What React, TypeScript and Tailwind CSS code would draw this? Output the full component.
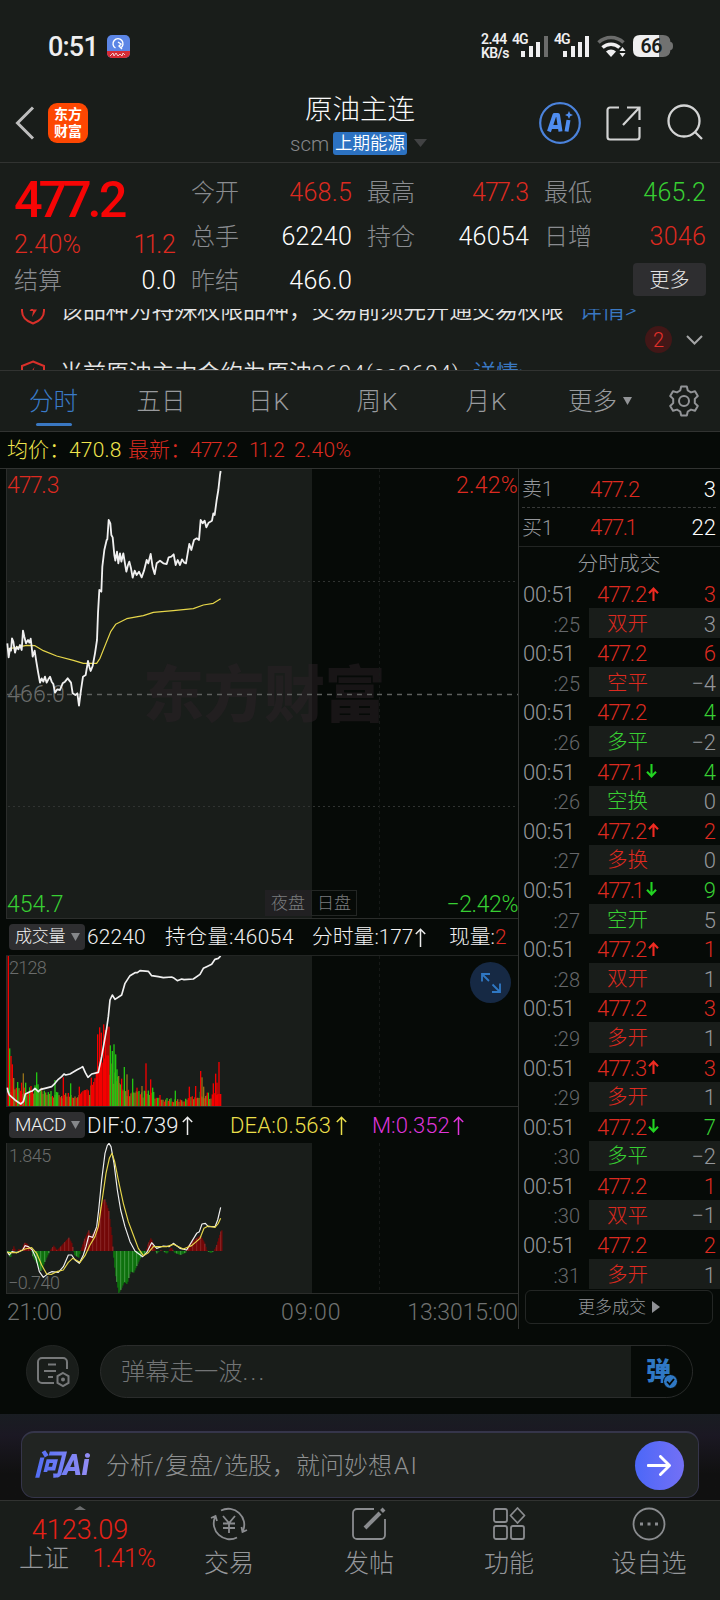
import React from 'react';

const RED = '#dc2a20';

interface Trade {
  sec: string;
  price: string;
  dir?: 'up' | 'down';
  qty: number;
  kind: string;
  change: number;
  green?: boolean;
}

const trades: Trade[] = [
  { sec: ':25', price: '477.2', dir: 'up', qty: 3, kind: '双开', change: 3 },
  { sec: ':25', price: '477.2', qty: 6, kind: '空平', change: -4 },
  { sec: ':26', price: '477.2', qty: 4, kind: '多平', change: -2, green: true },
  { sec: ':26', price: '477.1', dir: 'down', qty: 4, kind: '空换', change: 0, green: true },
  { sec: ':27', price: '477.2', dir: 'up', qty: 2, kind: '多换', change: 0 },
  { sec: ':27', price: '477.1', dir: 'down', qty: 9, kind: '空开', change: 5, green: true },
  { sec: ':28', price: '477.2', dir: 'up', qty: 1, kind: '双开', change: 1 },
  { sec: ':29', price: '477.2', qty: 3, kind: '多开', change: 1 },
  { sec: ':29', price: '477.3', dir: 'up', qty: 3, kind: '多开', change: 1 },
  { sec: ':30', price: '477.2', dir: 'down', qty: 7, kind: '多平', change: -2, green: true },
  { sec: ':30', price: '477.2', qty: 1, kind: '双平', change: -1 },
  { sec: ':31', price: '477.2', qty: 2, kind: '多开', change: 1 },
];

// Series are stored at 3x resolution and scaled down in the svg
const priceLine =
  '22,550 26,592 30,565 33,572 36,535 40,545 45,578 50,560 55,568 60,555 65,570 69,512 73,530 78,550 84,540 88,548 92,536 95,560 98,590 104,572 109,605 114,635 120,668 125,655 130,665 135,650 140,668 145,658 150,650 155,665 160,672 165,698 172,688 180,690 188,670 195,665 203,655 213,668 218,700 226,705 232,700 237,737 243,690 249,650 257,645 264,603 268,620 272,633 278,618 285,580 291,540 294,460 298,390 304,395 307,320 313,270 320,240 322,238 326,180 331,190 334,225 338,232 343,285 346,302 351,275 355,310 360,280 364,305 370,280 374,305 379,335 384,315 388,305 393,325 398,353 404,332 410,345 417,335 425,352 432,332 440,300 445,310 452,282 458,322 464,342 470,310 480,302 490,310 500,312 506,292 514,290 521,283 527,315 533,300 540,315 546,298 553,308 558,310 563,280 568,252 574,270 582,240 590,235 597,240 602,180 608,190 614,182 619,202 626,188 636,182 640,160 644,165 650,120 655,90 660,45 662,33';
const avgLine =
  '22,567 50,562 80,556 105,557 130,572 170,588 220,601 250,610 290,610 300,595 318,550 332,515 347,493 380,476 430,467 460,457 520,452 580,446 610,435 640,430 662,416';
const holdLine =
  '22,533 24,545 28,555 45,570 62,582 70,575 76,552 90,545 97,543 105,535 115,545 122,538 135,535 155,530 165,520 175,508 185,500 192,492 197,495 210,492 230,480 240,475 248,470 256,488 264,502 275,492 295,487 305,440 320,355 325,320 330,270 337,255 345,268 365,255 375,220 390,197 405,188 412,188 420,182 445,184 455,197 475,200 490,203 515,201 520,203 532,212 545,207 552,209 580,207 600,193 610,175 620,170 635,163 645,148 655,145 662,138';
const difLine =
  '22,455 28,465 36,455 50,458 68,450 75,437 85,440 97,450 108,475 118,515 130,532 145,520 155,515 175,517 190,500 205,465 215,465 225,480 238,490 250,465 258,440 266,408 278,412 290,380 296,330 305,240 315,160 322,136 327,130 333,140 342,190 352,270 362,330 375,380 390,425 405,453 428,470 440,458 455,428 470,445 490,438 508,440 520,430 540,445 560,450 575,425 590,400 598,395 606,372 616,370 625,380 645,380 653,360 662,322';
const deaLine =
  '22,458 50,458 75,447 95,443 110,460 125,495 140,522 155,523 170,515 190,510 205,487 218,475 240,487 255,467 270,435 285,410 295,380 305,310 318,220 328,175 336,160 344,185 355,240 370,310 385,365 400,405 415,445 430,467 445,458 460,440 500,440 520,433 550,447 575,437 600,415 612,385 625,378 645,382 655,370 662,355';

const volPeaks: [number, number, number][] = [
  [25, 452, 0], [29, 173, 1], [33, 150, 0], [37, 125, 0], [41, 84, 2], [53, 72, 1], [65, 70, 0], [70, 98, 2], [77, 70, 1], [93, 60, 0], [105, 62, 1], [110, 101, 1],
  [114, 65, 1], [125, 55, 2], [153, 45, 1], [165, 78, 1], [190, 86, 0], [212, 68, 1], [238, 58, 0], [274, 85, 0], [293, 215, 0], [299, 236, 0], [304, 220, 0], [311, 245, 0],
  [316, 228, 0], [321, 238, 0], [327, 238, 0], [331, 182, 1], [337, 165, 1], [342, 185, 1], [347, 155, 1], [351, 110, 1], [356, 90, 2], [365, 82, 0], [373, 117, 1], [381, 95, 2], [398, 82, 1], [411, 55, 0],
  [426, 60, 2], [438, 128, 0], [452, 80, 0], [458, 55, 1], [480, 33, 0], [526, 46, 1], [568, 58, 0], [587, 60, 0], [602, 105, 0], [606, 86, 2], [611, 58, 2], [622, 40, 0], [640, 68, 0],
  [647, 97, 0], [651, 70, 0], [657, 132, 0], [662, 36, 0],
];
const volEnvelope: [number, number][] = [
  [22, 90], [40, 70], [60, 62], [110, 55], [140, 42], [230, 44], [262, 52], [278, 80], [290, 120], [326, 165], [345, 110], [360, 65], [400, 45], [455, 50], [470, 25], [555, 22], [600, 45], [640, 40], [664, 36],
];
const macdShape: [number, number][] = [
  [22, -5], [30, -22], [36, 3], [40, 14], [45, 2], [50, -3], [54, 6], [64, 3], [72, 25], [80, 22], [92, 5], [98, -20], [110, -38], [122, -62], [132, -35], [148, 0], [160, 16],
  [170, 2], [185, 18], [205, 40], [215, 22], [222, -12], [235, -20], [242, 5], [252, 35], [265, 62], [272, 42], [285, 65], [293, 75], [300, 130], [312, 158], [325, 120], [335, 40],
  [338, 0], [345, -70], [355, -127], [362, -115], [372, -92], [380, -100], [390, -62], [400, -65], [415, -32], [425, -12], [435, -8], [442, 20], [452, 40], [460, 15], [468, -8], [482, 3], [500, -8],
  [512, 12], [522, -5], [540, -12], [556, -5], [562, 15], [580, 32], [600, 47], [612, 25], [620, 0], [632, -6], [640, 0], [648, 15], [662, 62],
];

function at(points: [number, number][], x: number) {
  for (let i = 1; i < points.length; i++) {
    if (x <= points[i][0]) {
      const [x0, y0] = points[i - 1];
      const [x1, y1] = points[i];
      return y0 + ((y1 - y0) * (x - x0)) / (x1 - x0);
    }
  }
  return points[points.length - 1][1];
}

const volColors = ['#f40000', '#22c412', '#94701a'];

function VolumeBars() {
  const bars: React.ReactNode[] = [];
  for (let i = 0; i < 160; i++) {
    const x = 23 + i * 4;
    const r = Math.abs(Math.sin(i * 12.9898) * 43758.5453) % 1;
    const solid = (x > 272 && x < 327) || x > 636 || (x > 240 && x < 266);
    const h = at(volEnvelope, x) * (solid ? 0.85 + r * 0.15 : 0.5 + r * 0.5);
    const c = solid ? 0 : r > 0.86 ? 1 : i % 3 === 0 ? 0 : 2;
    bars.push(<rect key={i} x={x} y={588 - h} width="4" height={h} fill={volColors[c]} />);
  }
  return (
    <>
      {bars}
      {volPeaks.map(([x, h, c]) => (
        <rect key={'p' + x} x={x - 2} y={588 - h} width="4" height={h} fill={volColors[c]} />
      ))}
    </>
  );
}

function MacdBars() {
  const bars: React.ReactNode[] = [];
  for (let x = 22; x < 665; x += 3) {
    const v = at(macdShape, x);
    const lit = Math.floor(x / 3) % 4 === 0;
    const fill = v > 0 ? (lit ? '#a52a2a' : '#8a0303') : lit ? '#4fb54f' : '#0b860b';
    bars.push(<rect key={x} x={x} y={v > 0 ? 453 - v : 453} width="3.2" height={Math.abs(v)} fill={fill} />);
  }
  return <>{bars}</>;
}

function Num({ value }: { value: string }) {
  if (value.startsWith('477.')) {
    return (
      <span>
        <span className="tracking-[-0.04em]">4</span>
        <span className="tracking-[-0.07em]">77</span>
        <span className={value.endsWith('1') ? 'tracking-[-0.11em]' : 'tracking-[0em]'}>.</span>
        {value.slice(4)}
      </span>
    );
  }
  if (value.startsWith('11.')) {
    return <span><span className="tracking-[-0.1em]">11</span>{value.slice(2)}</span>;
  }
  return <span className="tracking-[0.01em]">{value}</span>;
}

function Arrow({ dir }: { dir: 'up' | 'down' }) {
  return (
    <svg width="11" height="14" viewBox="0 0 11 14" fill="none" stroke={dir === 'up' ? '#ef2b22' : '#22d422'} strokeWidth="2.1" className="-mt-[2px] ml-[1px] shrink-0">
      {dir === 'up' ? <path d="M5.5 14V2M1 6.2 5.5 1.6 10 6.2" /> : <path d="M5.5 0v12M1 7.8l4.5 4.6L10 7.8" />}
    </svg>
  );
}

function LongArrow({ color }: { color: string }) {
  return (
    <svg width="11" height="19" viewBox="0 0 11 19" fill="none" stroke={color} strokeWidth="1.5" className="shrink-0">
      <path d="M5.5 19V1.5M.8 6 5.5 1.3 10.2 6" />
    </svg>
  );
}

function StatusBar() {
  return (
    <div className="flex h-[92px] items-center pl-[48px] pr-[47px] text-[#efeff0]">
      <span className="w-[50px] pt-[2px] text-[27px] leading-none font-medium tracking-[-0.8px]">0:51</span>
      <svg width="23" height="23" viewBox="0 0 23 23" className="ml-[9px]">
        <rect width="23" height="23" rx="5" fill="#5c86e6" />
        <path d="M0 16h23v2a5 5 0 0 1-5 5H5a5 5 0 0 1-5-5z" fill="#d62b35" />
        <path d="M8.5 13a5 5 0 1 1 5 0M11 7l3 2-2 2 3 3" fill="none" stroke="#fff" strokeWidth="1.4" />
        <path d="M3 21l3-3 1 3 2-3 2 3 2-2 2 2 1-3 2 2" fill="none" stroke="#f4c8cb" strokeWidth="1" />
      </svg>
      <div className="ml-auto flex h-[27px] items-start text-[14px] leading-[14.5px] font-semibold">
        <div className="-mt-[1px] w-[31px] tracking-[-0.6px]">2.44<br />KB/s</div>
        <svg width="38" height="27" viewBox="0 0 38 27" className="mr-[4px] overflow-visible">
          <text x="0" y="11" fontSize="14" letterSpacing="-1" fill="#efeff0">4G</text>
          <path d="M9 24v-6h4v6zM17 24V13h4v11zM24 24V9h4v15z" fill="#efeff0" />
          <path d="M32 24V3h4v21z" fill="#6b6c6b" />
        </svg>
        <svg width="38" height="27" viewBox="0 0 38 27" className="mr-[5px] overflow-visible">
          <text x="0" y="11" fontSize="14" letterSpacing="-1" fill="#efeff0">4G</text>
          <path d="M9 24v-6h4v6zM17 24V13h4v11zM24 24V9h4v15zM31 24V3h4v21z" fill="#efeff0" />
        </svg>
        <svg width="30" height="27" viewBox="0 0 30 27" fill="none" className="mr-[6px]">
          <path d="M1.5 9.500a18 18 0 0 1 25 0" stroke="#6b6c6b" strokeWidth="3.500" />
          <path d="M5.5 14.500a12.500 12.500 0 0 1 17 0" stroke="#efeff0" strokeWidth="3.500" />
          <path d="M9 18.500a7.500 7.500 0 0 1 10 0L14 24z" fill="#efeff0" />
          <path d="M25.500 14l3 4h-6zM25.500 24l3-4h-6z" fill="#efeff0" />
        </svg>
        <svg width="40" height="27" viewBox="0 0 40 27">
          <path d="M26 2h4q7 0 7.500 7 2.500 0 2.500 4t-2.500 4q-.5 7-7.500 7h-4z" fill="#717271" />
          <path d="M7 2h19v22H7q-7 0-7-7V9q0-7 7-7z" fill="#efeff0" />
          <text x="7.500" y="20" fontSize="19.500" letterSpacing="-.5" fill="#191d1a">66</text>
        </svg>
      </div>
    </div>
  );
}

function Header() {
  return (
    <header className="flex h-[71px] items-start border-b border-[#313331] pl-[15px] pr-[16px]">
      <svg width="20" height="34" viewBox="0 0 20 34" fill="none" className="mt-[14px]">
        <path d="M18 1.500 2.500 17 18 32.500" stroke="#bdbdbd" strokeWidth="3" />
      </svg>
      <div className="mt-[11px] ml-[13px] flex size-[40px] flex-col items-center justify-center rounded-[9px] bg-[#fd4702] text-[14px] leading-[17px] font-bold text-white">
        <span>东方</span>
        <span>财富</span>
      </div>
      <div className="ml-[202px] w-[138px]">
        <div className="pt-[1px] pl-[15px] text-[27.500px] leading-[34px] text-[#fafafa]">原油主连</div>
        <div className="mt-[4px] flex h-[24px] items-center">
          <span className="w-[43px] pt-[2px] text-[20.500px] text-[#85878a]">scm</span>
          <span className="rounded-[3px] bg-[#2c72c2] px-[2px] text-[17.500px] leading-[23px] font-[350] text-white">上期能源</span>
          <svg width="13" height="8" viewBox="0 0 13 8" className="ml-[7px] shrink-0"><path d="M0 0h13L6.500 8z" fill="#414243" /></svg>
        </div>
      </div>
      <svg width="42" height="42" viewBox="0 0 42 42" fill="none" className="mt-[10px] ml-[111px]">
        <circle cx="21" cy="21" r="19.800" stroke="#4b83dc" strokeWidth="2.200" />
        <path d="M10 29.500 15.500 13h3.500l2.500 16.500M12 25h9" stroke="#4f8df0" strokeWidth="4" strokeLinejoin="round" />
        <path d="M29.500 18l-2 11.500" stroke="#4f8df0" strokeWidth="4" />
        <path d="M30 9l1.200 2.800 2.800 1.200-2.800 1.200-1.200 2.800-1.200-2.800-2.800-1.200 2.800-1.200z" fill="#4f8df0" />
      </svg>
      <svg width="35" height="35" viewBox="0 0 35 35" fill="none" stroke="#d3d4d4" strokeWidth="2.200" className="mt-[14px] ml-[25px]">
        <path d="M13 1.500H4a2.500 2.500 0 0 0-2.500 2.500v27A2.500 2.500 0 0 0 4 33.500h27a2.500 2.500 0 0 0 2.500-2.500V21M21 1.500h12.500V14M33 2 17 19" />
      </svg>
      <svg width="37" height="37" viewBox="0 0 37 37" fill="none" stroke="#d3d4d4" strokeWidth="2.300" className="mt-[12px] ml-[26px]">
        <circle cx="17" cy="17" r="15.500" />
        <path d="m28 28 7 7" />
      </svg>
    </header>
  );
}

function Cell({ label, value, color }: { label: string; value: string; color: string }) {
  return (
    <div className="flex h-[44px] items-center justify-between pt-[2px]">
      <span className="text-[24px] text-[#8a8c90]">{label}</span>
      <span className="text-[25px]" style={{ color }}><Num value={value} /></span>
    </div>
  );
}

function Quotes() {
  return (
    <section className="flex h-[146px] pt-[7px] pr-[14px] pl-[14px]">
      <div className="w-[162px]">
        <div className="h-[52px] text-[50.500px] leading-[60px] font-medium text-[#f60505]">
          <span className="tracking-[-4.200px]">477</span><span className="tracking-[-2.800px]">.</span>2
        </div>
        <div className="flex h-[36px] items-center justify-between pt-[10px] text-[25px] text-[#dc2a20]">
          <Num value="2.40%" />
          <Num value="11.2" />
        </div>
        <Cell label="结算" value="0.0" color="#fff" />
      </div>
      <div className="ml-[15px] w-[161px]">
        <Cell label="今开" value="468.5" color={RED} />
        <Cell label="总手" value="62240" color="#fff" />
        <Cell label="昨结" value="466.0" color="#fff" />
      </div>
      <div className="ml-[15px] w-[162px]">
        <Cell label="最高" value="477.3" color={RED} />
        <Cell label="持仓" value="46054" color="#fff" />
      </div>
      <div className="ml-[15px] w-[162px]">
        <Cell label="最低" value="465.2" color="#38cf33" />
        <Cell label="日增" value="3046" color={RED} />
        <div className="mt-[5px] ml-auto flex h-[33px] w-[73px] items-center justify-center rounded-[4px] bg-[#2e2e30] text-[20px] text-[#e3e3e3]">更多</div>
      </div>
    </section>
  );
}

function Shield() {
  return (
    <svg width="26" height="28" viewBox="0 0 26 28" fill="none" stroke="#d9302a" strokeWidth="2" className="mr-[13px] shrink-0">
      <path d="M12 1.500 23 6v8c0 6-4 10-11 12.500C5 24 1 20 1 14V6z" />
      <path d="M13.500 7 8.500 14h3.500l-1 6 5-7.500h-4z" fill="#d9302a" stroke="none" />
    </svg>
  );
}

function Notices() {
  return (
    <section className="relative h-[62px] overflow-hidden border-b border-[#313331] pl-[21px] font-[350]">
      <div className="-mt-[13px] flex h-[30px] items-center whitespace-nowrap text-[22.900px] text-[#e6e6e6]">
        <Shield />
        <span className="w-[519px]">该品种为特殊权限品种，交易前须先开通交易权限</span>
        <span className="text-[#3a78c2]">详情&gt;</span>
      </div>
      <div className="mt-[33px] flex h-[30px] items-center whitespace-nowrap text-[22.900px] text-[#e6e6e6]">
        <Shield />
        <span className="w-[413px]">当前原油主力合约为原油<span className="tracking-[0.700px]">2604(sc2604)</span></span>
        <span className="text-[#3a78c2]">详情&gt;</span>
      </div>
      <div className="absolute top-[17px] right-[17px] flex items-center">
        <span className="flex size-[27px] items-center justify-center rounded-full bg-[#421717] pt-[1px] text-[20px] text-[#e3302a]">2</span>
        <svg width="17" height="10" viewBox="0 0 17 10" fill="none" stroke="#a4a5a6" strokeWidth="2" className="ml-[14px]"><path d="m1 1 7.500 7.500L16 1" /></svg>
      </div>
    </section>
  );
}

function Tabs() {
  return (
    <nav className="flex h-[61px] items-center border-b border-[#313331] text-[24.500px] text-[#989a9d]">
      <div className="flex w-[107px] flex-col items-center pt-[8px] text-[#3a7bc8]">
        <span className="leading-[36px]">分时</span>
        <span className="mt-[3px] h-[3px] w-[36px] rounded bg-[#3a78c2]" />
      </div>
      <span className="w-[108px] pt-[3px] text-center">五日</span>
      <span className="w-[108px] pt-[3px] text-center tracking-[1px]">日K</span>
      <span className="w-[109px] pt-[3px] text-center tracking-[1px]">周K</span>
      <span className="w-[109px] pt-[3px] text-center tracking-[1px]">月K</span>
      <div className="ml-[27px] flex items-center pt-[3px]">
        更多
        <svg width="9" height="8" viewBox="0 0 9 8" className="-mt-[3px] ml-[6px]"><path d="M0 0h9L4.500 8z" fill="#929497" /></svg>
      </div>
      <svg width="32" height="32" viewBox="0 0 32 32" fill="none" stroke="#929497" strokeWidth="2" className="ml-[36px]">
        <path strokeLinejoin="round" d="M13.200 1.500h5.600l1 4 3.200 1.900 4-1.200 2.800 4.800-3 2.900v4.200l3 2.900-2.800 4.800-4-1.200-3.200 1.900-1 4h-5.600l-1-4L9 24.600l-4 1.200L2.200 21l3-2.900v-4.200l-3-2.900L5 6.200l4 1.200 3.200-1.900z" />
        <circle cx="16" cy="16" r="5" />
      </svg>
    </nav>
  );
}

function PriceChart() {
  return (
    <div className="relative h-[450px] border-b border-[#2b2d2b]">
      <svg width="512" height="449" viewBox="0 0 512 449" fill="none" className="block">
        <rect width="306" height="449" fill="#191d1a" />
        <path d="M.5 0v449" stroke="#2b2d2b" />
        <text x="137" y="248" fontSize="61" fontWeight="900" fill="#2b2227" fillOpacity=".48" letterSpacing="-.5">东方财富</text>
        <path d="M2 112.500h510M2 337.500h510" stroke="#303331" strokeDasharray="2 3" />
        <path d="M373.500 0v449" stroke="#161917" strokeDasharray="3 3" />
        <text x="1" y="233" fontSize="23" fill="#6a6c6b" letterSpacing=".3">466.0</text>
        <path d="M1 225.500h511" stroke="#5d5f5e" strokeWidth="1.500" strokeDasharray="5 5" />
        <g transform="translate(-6 -9) scale(.33333)" strokeLinejoin="round">
          <polyline points={avgLine} stroke="#e6d64a" strokeWidth="3.500" />
          <polyline points={priceLine} stroke="#f0f0f0" strokeWidth="5.500" />
        </g>
      </svg>
      <span className="absolute top-[3px] left-[1px] text-[23px] leading-[27px] text-[#dc2a20]"><Num value="477.3" /></span>
      <span className="absolute top-[3px] right-0 text-[23px] leading-[27px] text-[#dc2a20]"><Num value="2.42%" /></span>
      <span className="absolute bottom-0 left-[1px] text-[23px] leading-[27px] text-[#38cf33]">454.7</span>
      <span className="absolute right-0 bottom-0 text-[23px] leading-[27px] tracking-[-0.4px] text-[#38cf33]">−2.42%</span>
      <div className="absolute bottom-[2px] left-[259px] flex text-[17px] leading-[24px] text-[#7b7d7f]">
        <span className="w-[46px] bg-[#212022] pt-[1px] text-center">夜盘</span>
        <span className="w-[46px] border border-[#232624] text-center">日盘</span>
      </div>
    </div>
  );
}

function Picker({ text, textClass }: { text: string; textClass: string }) {
  return (
    <span className="ml-[3px] flex h-[26px] w-[76px] shrink-0 items-center rounded-[4px] bg-[#2e2e30] pl-[6px] text-[#f2f2f2]">
      <span className={'w-[56px] ' + textClass}>{text}</span>
      <svg width="9" height="8" viewBox="0 0 9 8"><path d="M0 0h9L4.500 8z" fill="#85878a" /></svg>
    </span>
  );
}

function VolumePanel() {
  return (
    <>
      <div className="flex h-[37px] items-center whitespace-nowrap border-b border-[#222523] text-[20.800px] text-[#f2f2f2]">
        <Picker text="成交量" textClass="text-[17px] tracking-[-0.3px]" />
        <span className="ml-[2px] w-[78px] pt-[1px] tracking-[0.200px]">62240</span>
        <span className="w-[147px] pt-[1px] tracking-[0.500px]">持仓量:46054</span>
        <span className="mr-[5px] w-[98px] pt-[1px]">分时量:177</span>
        <LongArrow color="#ececec" />
        <span className="ml-[23px] pt-[1px]">现量:<span className="text-[#dc2a20]">2</span></span>
      </div>
      <div className="relative h-[151px] border-b border-[#2b2d2b]">
        <svg width="512" height="150" viewBox="0 0 512 150" fill="none" className="block">
          <rect width="306" height="150" fill="#191d1a" />
          <path d="M.5 0v150" stroke="#2b2d2b" />
          <path d="M373.500 0v150" stroke="#161917" strokeDasharray="3 3" />
          <g transform="translate(-6 -46) scale(.33333)">
            <VolumeBars />
            <polyline points={holdLine} stroke="#f0f0f0" strokeWidth="5" strokeLinejoin="round" />
          </g>
        </svg>
        <span className="absolute top-[1px] left-[3px] text-[18px] leading-[22px] tracking-[-0.7px] text-[#6a6c6b]">2128</span>
        <svg width="41" height="41" viewBox="0 0 41 41" fill="none" stroke="#2f78c4" strokeWidth="1.800" className="absolute top-[6px] right-[7px]">
          <circle cx="20.500" cy="20.500" r="20.500" fill="#162944" stroke="none" />
          <path d="M12 19.500V12h8M12.500 12.500l6.500 6.500M30 21.500V30h-8M29.500 29.500l-7-7" />
        </svg>
      </div>
    </>
  );
}

function MacdPanel() {
  return (
    <>
      <div className="flex h-[36px] items-center whitespace-nowrap text-[22px] text-[#f2f2f2]">
        <Picker text="MACD" textClass="text-[19px] tracking-[-0.6px]" />
        <span className="ml-[2px] w-[95px] pt-[1px]">DIF:0.739</span>
        <LongArrow color="#ececec" />
        <span className="ml-[37px] w-[106px] pt-[1px] tracking-[0.200px] text-[#eadf4a]">DEA:0.563</span>
        <LongArrow color="#eadf4a" />
        <span className="ml-[25px] w-[81px] pt-[1px] text-[#df35da]">M:0.352</span>
        <LongArrow color="#df35da" />
      </div>
      <div className="relative h-[151px] border-b border-[#2b2d2b]">
        <svg width="512" height="150" viewBox="0 0 512 150" fill="none" className="block">
          <rect width="306" height="150" fill="#191d1a" />
          <path d="M.5 0v150" stroke="#2b2d2b" />
          <path d="M373.500 0v150" stroke="#161917" strokeDasharray="3 3" />
          <text x="2" y="146" fontSize="18" letterSpacing="-.5" fill="#6a6c6b">−0.740</text>
          <g transform="translate(-6 -43) scale(.33333)" strokeLinejoin="round">
            <MacdBars />
            <polyline points={difLine} stroke="#f0f0f0" strokeWidth="3.500" />
            <polyline points={deaLine} stroke="#e6d64a" strokeWidth="3.500" />
          </g>
        </svg>
        <span className="absolute top-[2px] left-[3px] text-[18px] leading-[22px] tracking-[-0.500px] text-[#6a6c6b]">1.845</span>
      </div>
      <div className="flex h-[35px] items-center pt-[3px] text-[23px] text-[#707271]">
        <span className="w-[275px] pl-[1px] tracking-[-0.200px]">21:00</span>
        <span className="w-[126px] tracking-[0.900px]">09:00</span>
        <span className="ml-auto tracking-[-0.1px]">13:3015:00</span>
      </div>
    </>
  );
}

function OrderBook() {
  return (
    <aside className="w-[201px] pt-[1px] text-[22px] text-[#95979b]">
      {[['卖1', '477.2', '3'], ['买1', '477.1', '22']].map(([side, price, qty], i) => (
        <div key={side} className={i === 0 ? 'ml-[3px] mr-[4px] flex h-[38px] items-center border-b border-dashed border-[#383a39] pt-[1px]' : 'flex h-[39px] items-center border-b border-[#222523] pt-[1px] pr-[4px] pl-[3px]'}>
          <span className="w-[68px] text-[20px]">{side}</span>
          <span className="text-[#dc2a20]"><Num value={price} /></span>
          <span className="ml-auto text-[#fff]">{qty}</span>
        </div>
      ))}
      <div className="flex h-[32px] items-center justify-center pt-[3px] pr-[1px] text-[20.700px]">分时成交</div>
      {trades.map((t, i) => (
        <div key={i} className="h-[59.200px]">
          <div className="flex h-[29px] items-center pt-[2px] pr-[4px] pl-[4px]">
            <span className="w-[74px] tracking-[-0.3px]">00:51</span>
            <span className="text-[#dc2a20]"><Num value={t.price} /></span>
            {t.dir && <Arrow dir={t.dir} />}
            <span className={t.green ? 'ml-auto text-[#38cf33]' : 'ml-auto text-[#dc2a20]'}>{t.qty}</span>
          </div>
          <div className="flex h-[30.200px] items-center">
            <span className="w-[61px] pt-[3px] text-right text-[20px] text-[#65676a]">{t.sec}</span>
            <div className="ml-[9px] flex h-full flex-1 items-center bg-[#191d1a] pt-[2px] pr-[4px] pl-[18px]">
              <span className={t.green ? 'text-[20.500px] text-[#38cf33]' : 'text-[20.500px] text-[#dc2a20]'}>{t.kind}</span>
              <span className="ml-auto">{String(t.change).replace('-', '−')}</span>
            </div>
          </div>
        </div>
      ))}
      <div className="mt-[1px] ml-[6px] flex h-[34px] w-[188px] items-center justify-center rounded-[6px] border border-[#232624] text-[17px]">
        更多成交
        <svg width="8" height="12" viewBox="0 0 8 12" className="ml-[6px]"><path d="M0 0v12l8-6z" fill="#8f9195" /></svg>
      </div>
    </aside>
  );
}

function Danmaku() {
  return (
    <div className="flex h-[85px] items-start bg-[#060a07] pt-[16px] pl-[26px]">
      <div className="flex size-[53px] items-center justify-center rounded-full border border-[#232624] bg-[#191d1a]">
        <svg width="34" height="32" viewBox="0 0 34 32" fill="none" stroke="#77797a" strokeWidth="2">
          <path d="M31 13V6a4 4 0 0 0-4-4H6a4 4 0 0 0-4 4v17a4 4 0 0 0 4 4h12M12 8.500h8M8 15h12M12 21h5" />
          <path d="m27 17 5.500 3.200v6.600L27 30l-5.500-3.200v-6.600z" />
          <circle cx="27" cy="23.500" r="1" />
        </svg>
      </div>
      <div className="ml-[21px] flex h-[53px] w-[593px] items-center overflow-hidden rounded-full border border-[#2a2c2b] bg-[#191d1a]">
        <span className="flex-1 pt-[1px] pl-[20px] text-[24.300px] text-[#727475]">弹幕走一波<span className="tracking-[2.200px]">...</span></span>
        <div className="flex h-full w-[61px] items-center bg-[#060a07] pl-[15px]">
          <div className="relative text-[25px] leading-[26px] font-black text-[#2f78c4]">
            弹
            <svg width="15" height="15" viewBox="0 0 15 15" fill="none" className="absolute -right-[7px] -bottom-[4px]">
              <circle cx="7.500" cy="7.500" r="7" fill="#2f78c4" stroke="#060a07" />
              <path d="m4 7.500 2.600 2.800L11 5" stroke="#060a07" strokeWidth="1.800" />
            </svg>
          </div>
        </div>
      </div>
    </div>
  );
}

function AskBar() {
  return (
    <div className="h-[87px] border-b border-[#313331] bg-linear-to-b from-[#191d22] via-[#1b1823] via-25% to-[#101010] to-70% px-[21px] pt-[17px]">
      <div className="flex h-[67px] items-center rounded-[13px] border border-t-2 border-[#35354a] bg-[#212422] pr-[14px] pl-[12px]">
        <span className="w-[72px] bg-linear-to-r from-[#4f6cf5] to-[#a795f3] bg-clip-text text-[29px] leading-[36px] font-black italic tracking-[-0.2px] text-transparent">问Ai</span>
        <span className="pt-[1px] text-[24px] text-[#8e9091]">分析<span className="tracking-[0.06em]">/</span>复盘<span className="tracking-[0.06em]">/</span>选股，就问妙想<span className="pl-[2px] tracking-[1.500px]">AI</span></span>
        <div className="ml-auto flex size-[49px] items-center justify-center rounded-full bg-linear-to-r from-[#4b67f8] to-[#7370f5]">
          <svg width="25" height="21" viewBox="0 0 26 22" fill="none" stroke="#fff" strokeWidth="3"><path d="M1 11h22M14 1.500 23.500 11 14 20.500" strokeLinejoin="round" strokeLinecap="round" /></svg>
        </div>
      </div>
    </div>
  );
}

function NavItem({ label, children }: { label: string; children: React.ReactNode }) {
  return (
    <div className="flex w-[140px] flex-col items-center pt-[6px]">
      <svg width="38" height="34" viewBox="0 0 38 34" fill="none" stroke="#8a8c8f" strokeWidth="1.800">{children}</svg>
      <span className="mt-[5px] text-[25px] leading-[36px] text-[#95979a]">{label}</span>
    </div>
  );
}

function BottomNav() {
  return (
    <footer className="flex h-[99px]">
      <div className="relative w-[159px] pt-[14px] pl-[19px]">
        <svg width="12" height="4" viewBox="0 0 12 4" className="absolute top-[5px] left-[74px]"><path d="m0 4 6-4 6 4z" fill="#6a6c6d" /></svg>
        <div className="w-[122px] text-center text-[27px] leading-[30px] text-[#e62117]">4123.09</div>
        <div className="flex w-[136px] justify-between leading-[28px]">
          <span className="text-[25px] text-[#95979a]">上证</span>
          <span className="text-[25px] tracking-[-0.700px] text-[#e62117]">1.41%</span>
        </div>
      </div>
      <NavItem label="交易">
        <path d="M11 3.500A16 16 0 0 1 33 24M27 30.500A16 16 0 0 1 5 10M1 11l4.500-2 1.500 5M37 23l-4.500 2-1-5" />
        <path d="m13 9 6 7 6-7M19 16v10M13 16.500h12M13 21h12" />
      </NavItem>
      <NavItem label="发帖">
        <path d="M24 2H7a4 4 0 0 0-4 4v22a4 4 0 0 0 4 4h24a4 4 0 0 0 4-4V12" />
        <path d="m15 21 15-15" strokeWidth="4" /><path d="m31.500 4.500 2.500-2.500" strokeWidth="4" />
      </NavItem>
      <NavItem label="功能">
        <rect x="4" y="2" width="13" height="13" rx="2" />
        <path d="m27.500 1 7 7.500-7 7.500-7-7.500z" strokeLinejoin="round" />
        <rect x="4" y="19" width="13" height="13" rx="2" />
        <rect x="21" y="19" width="13" height="13" rx="2" />
      </NavItem>
      <NavItem label="设自选">
        <circle cx="19" cy="17" r="15.500" />
        <path d="M10 17h3M17.500 17h3M25 17h3" strokeWidth="3" />
      </NavItem>
    </footer>
  );
}

export default function App() {
  return (
    <div className="h-[1600px] w-[720px] overflow-hidden bg-[#191d1a] font-['Roboto','Noto_Sans_CJK_SC',sans-serif] font-light">
      <StatusBar />
      <Header />
      <Quotes />
      <Notices />
      <Tabs />
      <main className="bg-[#060a07]">
        <div className="flex h-[37px] items-center whitespace-nowrap border-b border-[#313331] pt-[2px] pl-[7px] text-[21px] text-[#f0e54c]">
          <span className="w-[62px]">均价：</span>
          <span className="w-[59px] tracking-[0.200px]">470.8</span>
          <span className="w-[62px] text-[#dc2a20]">最新：</span>
          <span className="w-[59px] text-[#dc2a20]"><Num value="477.2" /></span>
          <span className="w-[45px] text-[#dc2a20]"><Num value="11.2" /></span>
          <span className="tracking-[0.4px] text-[#dc2a20]">2.40%</span>
        </div>
        <div className="flex h-[860px]">
          <div className="ml-[6px] w-[513px] border-r border-[#313331]">
            <PriceChart />
            <VolumePanel />
            <MacdPanel />
          </div>
          <OrderBook />
        </div>
      </main>
      <Danmaku />
      <AskBar />
      <BottomNav />
    </div>
  );
}
